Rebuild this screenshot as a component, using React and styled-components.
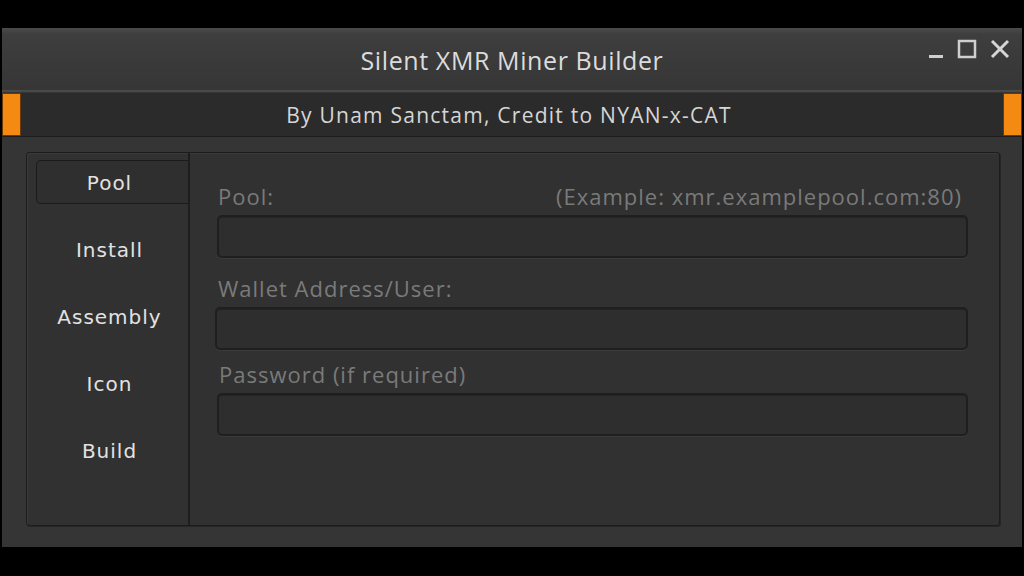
import React from 'react'
import styled, { createGlobalStyle } from 'styled-components'

const GlobalStyle = createGlobalStyle`
  html, body {
    margin: 0;
    padding: 0;
    background: #000;
    width: 1024px;
    height: 576px;
    overflow: hidden;
  }
`;

const Screen = styled.div`
  width: 1024px;
  height: 576px;
  padding-top: 28px;
  box-sizing: border-box;
  background: #000;
`;

const Window = styled.div`
  margin-left: 2px;
  width: 1020px;
  height: 519px;
  background: #353535;
  display: flex;
  flex-direction: column;
  box-sizing: border-box;
`;

const TitleBar = styled.div`
  height: 64px;
  background: linear-gradient(#4b4b4b 0px, #3e3e3e 6px, #393939 40px, #363636 100%);
  border-bottom: 2px solid #4a4a4a;
  position: relative;
  display: flex;
  align-items: center;
  justify-content: center;
  box-sizing: border-box;
`;

const Title = styled.div`
  font-family: 'Open Sans', sans-serif;
  font-size: 25px;
  letter-spacing: 0.6px;
  color: #dcdcdc;
  padding-top: 2px;
`;

const Controls = styled.div`
  position: absolute;
  right: 12px;
  top: 9px;
  display: flex;
  gap: 13px;
  align-items: center;
`;

const SubBar = styled.div`
  height: 43px;
  margin-top: 1px;
  background: #2b2b2b;
  border-bottom: 1px solid #1d1d1d;
  display: flex;
  align-items: stretch;
`;

const Tab = styled.div`
  width: 19px;
  background: #f48a12;
  border: 1px solid #6a3a06;
  box-sizing: border-box;
`;

const SubText = styled.div`
  flex: 1;
  display: flex;
  align-items: center;
  justify-content: center;
  padding-right: 6px;
  font-family: 'Open Sans', sans-serif;
  font-size: 21px;
  letter-spacing: 1.25px;
  color: #d6d6d6;
`;

const Body = styled.div`
  flex: 1;
  padding: 15px 22px 21px 24px;
  display: flex;
`;

const Panel = styled.div`
  flex: 1;
  display: flex;
  background: #313131;
  border: 1px solid #1c1c1c;
  box-shadow: 1px 1px 0 #262626, inset 1px 1px 0 #3a3a3a;
  border-radius: 3px;
`;

const Sidebar = styled.div`
  width: 163px;
  border-right: 2px solid #1e1e1e;
  padding: 7px 0 0 9px;
  display: flex;
  flex-direction: column;
  box-sizing: border-box;
`;

const NavItem = styled.div`
  height: 44px;
  margin-bottom: 23px;
  padding: 2px 6px 0 0;
  display: flex;
  align-items: center;
  justify-content: center;
  font-family: 'DejaVu Sans', sans-serif;
  font-size: 20px;
  letter-spacing: 1px;
  color: #e2e2e2;
  border: 1px solid ${p => (p.$active ? '#1b1b1b' : 'transparent')};
  border-right: none;
  border-radius: 5px 0 0 5px;
  background: ${p => (p.$active ? '#2f2f2f' : 'transparent')};
  box-sizing: border-box;
`;

const Content = styled.div`
  flex: 1;
  padding: 30px 31px 0 27px;
  display: flex;
  flex-direction: column;
`;

const LabelRow = styled.div`
  display: flex;
  justify-content: space-between;
  padding: 0 6px 0 ${p => p.$indent || 0}px;
  font-family: 'Open Sans', sans-serif;
  font-size: 22px;
  letter-spacing: 1px;
  line-height: 26px;
  color: #7a7a7a;
  margin-top: ${p => p.$top || 0}px;
`;

const Field = styled.div`
  height: 43px;
  margin-top: 6px;
  margin-left: ${p => p.$shift || 0}px;
  background: #2e2e2e;
  border: 2px solid #1f1f1f;
  border-radius: 5px;
  box-shadow: inset 0 1px 0 #242424, 0 1px 0 #3a3a3a;
  box-sizing: border-box;
`;

const Icon = ({ kind }) => {
  if (kind === 'min')
    return (
      <svg width="16" height="24" viewBox="0 0 16 24">
        <rect x="1" y="18" width="14" height="3" fill="#cfcfcf" />
      </svg>
    );
  if (kind === 'max')
    return (
      <svg width="20" height="24" viewBox="0 0 20 24">
        <rect x="2" y="4" width="16" height="16" fill="none" stroke="#cfcfcf" strokeWidth="2.5" />
      </svg>
    );
  return (
    <svg width="20" height="24" viewBox="0 0 20 24">
      <path d="M2 4 L18 20 M18 4 L2 20" stroke="#d6d6d6" strokeWidth="3" />
    </svg>
  );
};

const navItems = ['Pool', 'Install', 'Assembly', 'Icon', 'Build'];

export default function App() {
  return (
    <Screen>
      <GlobalStyle />
      <Window>
        <TitleBar>
          <Title>Silent XMR Miner Builder</Title>
          <Controls>
            <Icon kind="min" />
            <Icon kind="max" />
            <Icon kind="close" />
          </Controls>
        </TitleBar>
        <SubBar>
          <Tab />
          <SubText>By Unam Sanctam, Credit to NYAN-x-CAT</SubText>
          <Tab />
        </SubBar>
        <Body>
          <Panel>
            <Sidebar>
              {navItems.map((n, i) => (
                <NavItem key={n} $active={i === 0}>{n}</NavItem>
              ))}
            </Sidebar>
            <Content>
              <LabelRow $indent={1}>
                <span>Pool:</span>
                <span>(Example: xmr.examplepool.com:80)</span>
              </LabelRow>
              <Field />
              <LabelRow $top={17} $indent={1}>
                <span>Wallet Address/User:</span>
              </LabelRow>
              <Field $shift={-2} />
              <LabelRow $top={11} $indent={2}>
                <span>Password (if required)</span>
              </LabelRow>
              <Field />
            </Content>
          </Panel>
        </Body>
      </Window>
    </Screen>
  );
}
